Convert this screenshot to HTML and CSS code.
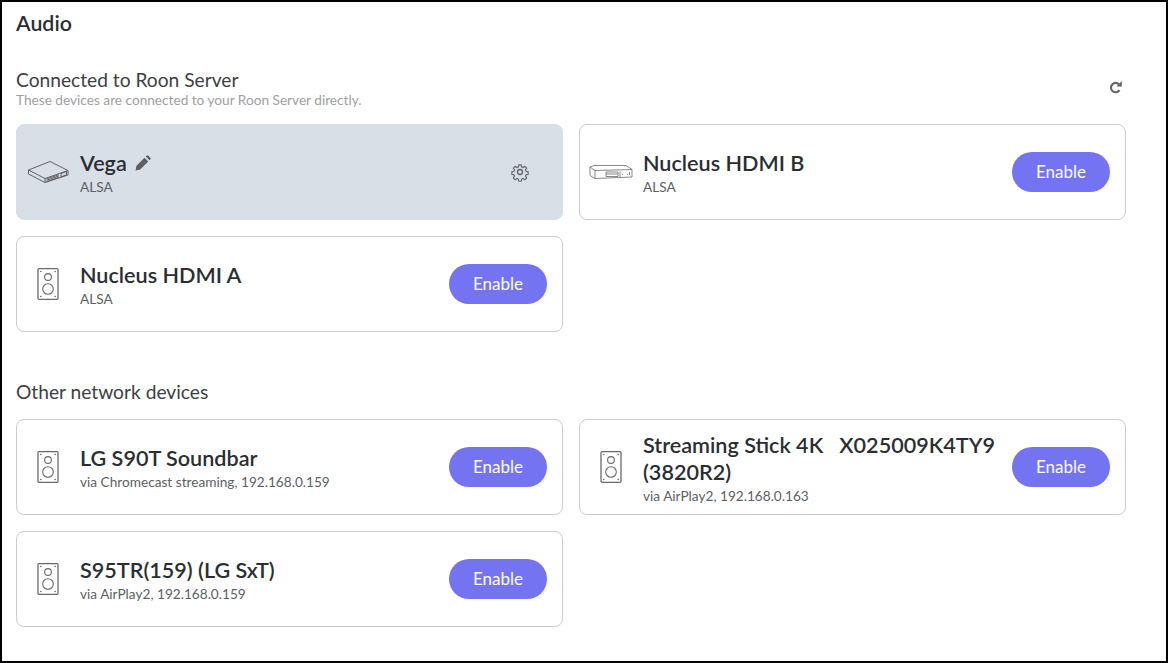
FILE: index.html
```html
<!DOCTYPE html>
<html lang="en">
<head>
<meta charset="utf-8">
<title>Audio</title>
<link rel="stylesheet" href="styles.css">
</head>
<body>
<svg class="defs" width="0" height="0" aria-hidden="true">
  <defs>
    <symbol id="speaker" viewBox="0 0 22 32">
      <rect x="1" y="0.7" width="20" height="30.6" rx="1" fill="none" stroke="currentColor" stroke-width="1.3"/>
      <circle cx="11" cy="9" r="3.400" fill="none" stroke="currentColor" stroke-width="1.1"/>
      <circle cx="11" cy="21" r="5.300" fill="none" stroke="currentColor" stroke-width="1.1"/>
      <g fill="currentColor"><circle cx="3.8" cy="3.500" r=".8"/><circle cx="18.200" cy="3.500" r=".8"/><circle cx="3.800" cy="28.500" r=".8"/><circle cx="18.200" cy="28.500" r=".8"/></g>
    </symbol>
  </defs>
</svg>
<main class="page">
  <h1 class="title">Audio</h1>
  <section class="section first">
    <div class="section-head">
      <div>
        <h2 class="heading">Connected to Roon Server</h2>
        <p class="sub">These devices are connected to your Roon Server directly.</p>
      </div>
      <svg class="refresh" viewBox="0 0 12 12" width="13" height="13"><path d="M9.300 3.200A4.300 4.300 0 1 0 9.700 8.500" fill="none" stroke="currentColor" stroke-width="2"/><path d="M6.800 5 11.800 5 11.800 0z" fill="currentColor"/></svg>
    </div>
    <div class="grid">
      <article class="card active">
        <span class="icon">
          <svg viewBox="0 0 41 22" width="41" height="22" fill="none" stroke="currentColor" stroke-width=".9" stroke-linejoin="round"><path d="M.5 9 22 .5 40 9.500 17 17.500z"/><path d="M.5 9V13L17 21.500 40 14V9.500"/><path d="M17 17.500V21.500M18.500 18 31 13.600M18.500 19.300 31 14.900M18.500 20.600 31 16.200"/><path d="M33 12.500 38.500 10.500V13.800L33 15.800z"/></svg>
        </span>
        <div class="info">
          <div class="name-row"><h3 class="name">Vega</h3>
            <svg class="pencil" viewBox="0 0 16 16" width="16" height="16"><path d="M.5 15.500l1-4.700 8-8 3.700 3.700-8 8zM10.800 1.500l.8-.8a1.200 1.200 0 0 1 1.700 0l2 2a1.200 1.200 0 0 1 0 1.700l-.8.8z" fill="currentColor"/></svg>
          </div>
          <p class="detail">ALSA</p>
        </div>
        <svg class="gear" viewBox="0 0 24 24" width="20" height="20" fill="none" stroke="currentColor" stroke-width="1.600" stroke-linejoin="round"><circle cx="12" cy="12" r="3"/><path d="M10.300 2.500h3.400l.6 2.900 1.700.7 2.500-1.600 2.400 2.400-1.600 2.500.7 1.700 2.900.6v3.400l-2.900.6-.7 1.700 1.600 2.500-2.400 2.400-2.500-1.600-1.700.7-.6 2.900h-3.400l-.6-2.900-1.700-.7-2.500 1.600-2.400-2.400 1.600-2.500-.7-1.700-2.900-.6v-3.400l2.900-.6.7-1.700-1.600-2.500 2.400-2.400 2.500 1.600 1.700-.7z" transform="translate(1.200 1.200) scale(.9)"/></svg>
      </article>
      <article class="card">
        <span class="icon">
          <svg class="nucleus" viewBox="0 0 44 14" width="44" height="14" fill="none" stroke="currentColor" stroke-width=".8" stroke-linejoin="round"><path d="M1 2 5 .5H37L43 4.500 6 5.500z"/><path d="M1 2V10.500L6 13.500 43 12V4.500M6 5.500V13.500"/><path d="M17 7H29V11.500H17zM17 9H29"/><path d="M31 6.500V12M33 9.500h1M38 9.500h1M40.500 7v3"/></svg>
        </span>
        <div class="info">
          <h3 class="name">Nucleus HDMI B</h3>
          <p class="detail">ALSA</p>
        </div>
        <button class="enable" type="button">Enable</button>
      </article>
      <article class="card">
        <span class="icon"><svg class="speaker" width="22" height="32"><use href="#speaker"/></svg></span>
        <div class="info">
          <h3 class="name">Nucleus HDMI A</h3>
          <p class="detail">ALSA</p>
        </div>
        <button class="enable" type="button">Enable</button>
      </article>
    </div>
  </section>
  <section class="section second">
    <h2 class="heading">Other network devices</h2>
    <div class="grid">
      <article class="card">
        <span class="icon"><svg class="speaker" width="22" height="32"><use href="#speaker"/></svg></span>
        <div class="info">
          <h3 class="name">LG S90T Soundbar</h3>
          <p class="detail">via Chromecast streaming, 192.168.0.159</p>
        </div>
        <button class="enable" type="button">Enable</button>
      </article>
      <article class="card">
        <span class="icon"><svg class="speaker" width="22" height="32"><use href="#speaker"/></svg></span>
        <div class="info">
          <h3 class="name">Streaming Stick 4K &nbsp; X025009K4TY9 (3820R2)</h3>
          <p class="detail">via AirPlay2, 192.168.0.163</p>
        </div>
        <button class="enable" type="button">Enable</button>
      </article>
      <article class="card">
        <span class="icon"><svg class="speaker" width="22" height="32"><use href="#speaker"/></svg></span>
        <div class="info">
          <h3 class="name">S95TR(159) (LG SxT)</h3>
          <p class="detail">via AirPlay2, 192.168.0.159</p>
        </div>
        <button class="enable" type="button">Enable</button>
      </article>
    </div>
  </section>
</main>
</body>
</html>
```

FILE: styles.css
```css
* { box-sizing: border-box; }
html, body { margin: 0; padding: 0; background: #fff; }
body { font-family: Lato, "Liberation Sans", sans-serif; color: #2a2e33; overflow: hidden; }
.defs { display: block; height: 0; }
.page {
  width: 1168px;
  height: 663px;
  border: 2px solid #000;
  padding: 7px 40px 0 14px;
  overflow: hidden;
}
h1, h2, h3, p { margin: 0; font-weight: 400; }
.title { font-size: 21.33px; line-height: 28px; font-weight: 600; color: #2a2e33; }
.section.first { margin-top: 30px; }
.section.second { margin-top: 47px; }
.section-head { display: flex; justify-content: space-between; align-items: center; padding-right: 4px; }
.heading { font-size: 19.2px; line-height: 26px; color: #3c3f44; }
.sub { font-size: 13.65px; line-height: 14px; color: #a0a0a0; }
.refresh { color: #666; margin-top: 1px; }
.first .grid { margin-top: 17px; }
.second .grid { margin-top: 14px; }
.grid { display: grid; grid-template-columns: 547px 547px; gap: 16px; }
.card {
  height: 96px;
  border: 1px solid #ccc;
  border-radius: 8px;
  padding: 0 15px 0 9px;
  display: flex;
  align-items: center;
  background: #fff;
}
.card.active { background: #d9dfe7; border-color: #d9dfe7; padding-right: 32px; }
.icon { width: 44px; margin-right: 10px; flex: none; display: flex; justify-content: center; color: #6a6a6a; }
.card.active .icon { color: #555; }
.info { flex: 1; min-width: 0; padding-top: 3px; }
.name-row { display: flex; align-items: center; gap: 8px; }
.name { font-size: 21.6px; line-height: 27px; font-weight: 600; color: #2a2e33; padding-right: 8px; }
.name-row .name { padding-right: 0; }
.detail { font-size: 13.65px; line-height: 20px; color: #5c5f63; }
.pencil { color: #5c5f63; margin-top: -2px; }
.gear { color: #666; flex: none; }
.enable {
  flex: none;
  width: 98px;
  height: 40px;
  border: 0;
  border-radius: 20px;
  background: #7474f2;
  color: #fff;
  font: 400 17px Lato, "Liberation Sans", sans-serif;
  padding: 0 0 1px;
}
```
